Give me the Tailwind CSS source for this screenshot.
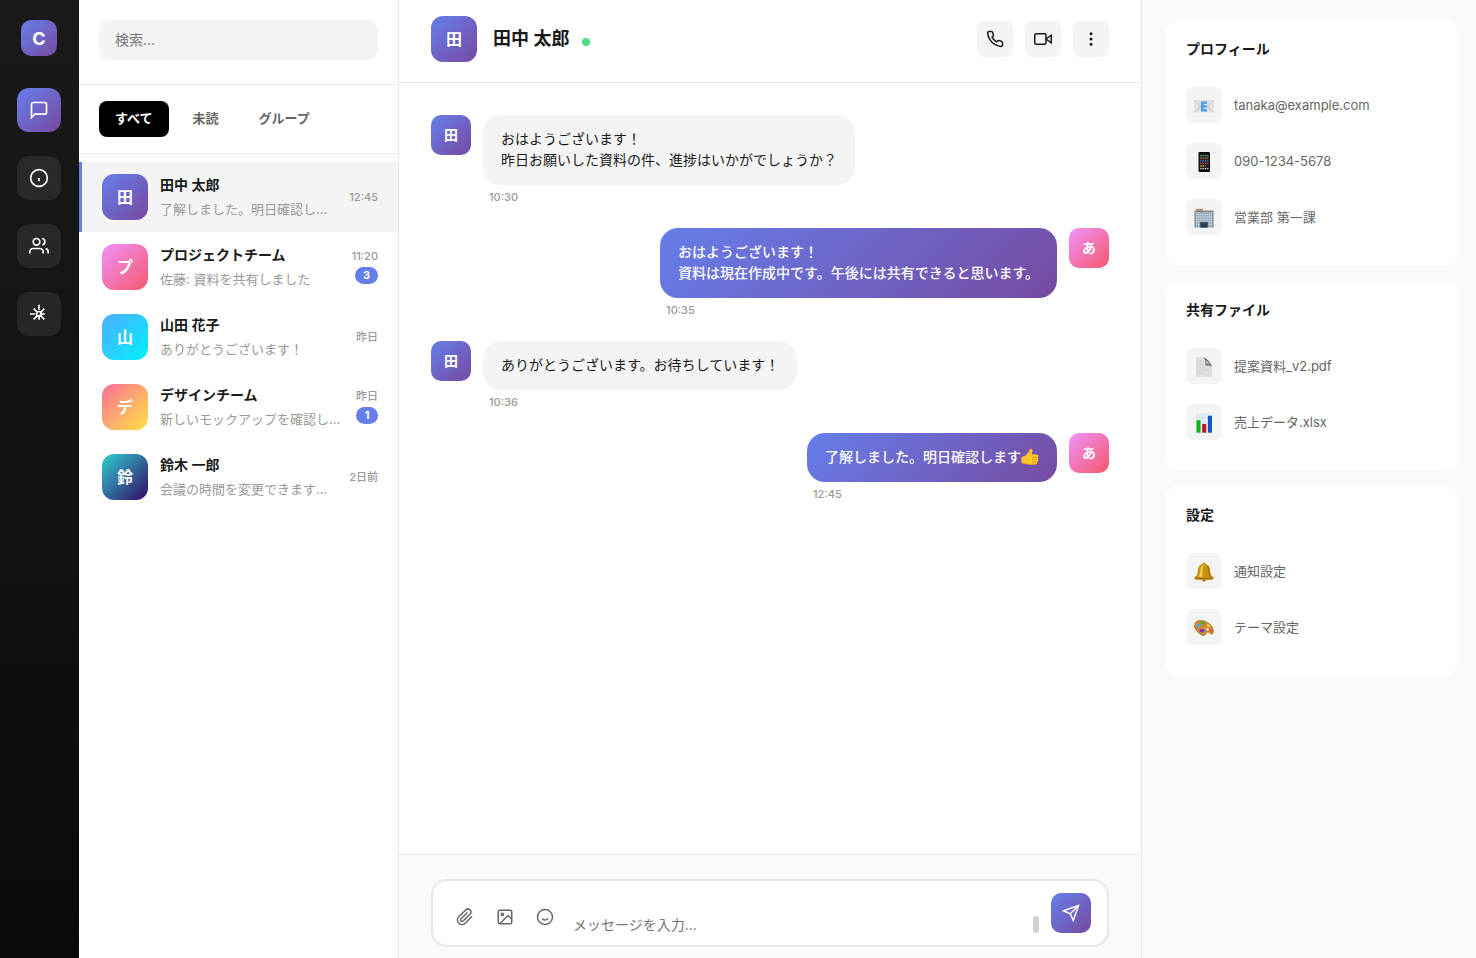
<!DOCTYPE html>
<html lang="ja">
<head>
  <meta charset="UTF-8">
  <meta name="viewport" content="width=device-width, initial-scale=1.0">
  <title>チャット</title>
  <script src="https://cdn.jsdelivr.net/npm/@tailwindcss/browser@4"></script>
</head>
<body class="flex h-screen overflow-hidden bg-[#fafafa] font-['Inter','Noto_Sans_CJK_JP',sans-serif] text-sm text-[#1a1a1a]">

  <!-- Icon rail -->
  <nav class="flex w-[79px] shrink-0 flex-col items-center bg-[linear-gradient(180deg,#1a1a1a,#0a0a0a)] py-5 pr-px text-white" aria-label="メイン">
    <div class="mb-8 flex size-9 items-center justify-center rounded-[10px] bg-[linear-gradient(135deg,#667eea,#764ba2)] pt-0.5 text-lg font-bold">C</div>
    <div class="flex flex-col gap-6">
      <button class="flex size-11 items-center justify-center rounded-xl bg-[linear-gradient(135deg,#667eea,#764ba2)]" aria-label="チャット">
        <svg class="size-5" viewBox="0 0 24 24" fill="none" stroke="currentColor" stroke-width="2"><path d="M21 15a2 2 0 0 1-2 2H7l-4 4V5a2 2 0 0 1 2-2h14a2 2 0 0 1 2 2z"/></svg>
      </button>
      <button class="flex size-11 items-center justify-center rounded-xl bg-white/8" aria-label="情報">
        <svg class="size-5" viewBox="0 0 24 24" fill="none" stroke="currentColor" stroke-width="2"><circle cx="12" cy="12" r="10"/><path d="M12 16v-4"/></svg>
      </button>
      <button class="flex size-11 items-center justify-center rounded-xl bg-white/8" aria-label="連絡先">
        <svg class="size-5" viewBox="0 0 24 24" fill="none" stroke="currentColor" stroke-width="2"><path d="M17 21v-2a4 4 0 0 0-4-4H5a4 4 0 0 0-4 4v2"/><circle cx="9" cy="7" r="4"/><path d="M23 21v-2a4 4 0 0 0-3-3.87M16 3.13a4 4 0 0 1 0 7.75"/></svg>
      </button>
      <button class="flex size-11 items-center justify-center rounded-xl bg-white/8" aria-label="設定">
        <svg class="size-5" viewBox="0 0 24 24" fill="none" stroke="currentColor" stroke-width="2"><circle cx="12" cy="12" r="3"/><path d="M12 1v6m0 6v6M1 12h6m6 0h6M5.6 5.6l4.3 4.3m4.2 4.2l4.3 4.3M5.6 18.4l4.3-4.3m4.2-4.2l4.3-4.3"/></svg>
      </button>
    </div>
  </nav>

  <!-- Conversations -->
  <aside class="flex w-80 shrink-0 flex-col border-r border-[#e8e8e8] bg-white">
    <div class="border-b border-[#e8e8e8] px-5 pt-5 pb-6">
      <input type="search" aria-label="検索" placeholder="検索..." class="block h-10 w-full rounded-[10px] bg-[#f4f4f4] px-4 pb-0.5 text-sm outline-none placeholder:text-[#757575]">
    </div>
    <div class="flex gap-2 border-b border-[#e8e8e8] px-5 py-4 text-[13px] font-semibold text-[#666]">
      <button class="h-9 rounded-lg bg-black px-4 pb-0.5 text-white">すべて</button>
      <button class="h-9 rounded-lg px-4 pb-0.5">未読</button>
      <button class="h-9 rounded-lg px-4 pb-0.5">グループ</button>
    </div>
    <div class="flex flex-col overflow-y-auto py-2">
      <button class="flex w-full items-center gap-3 border-l-3 border-[#667eea] bg-[#f4f4f4] px-5 py-3 text-left">
        <span class="flex size-[46px] shrink-0 items-center justify-center rounded-xl bg-[linear-gradient(135deg,#667eea,#764ba2)] text-base font-bold text-white">田</span>
        <span class="flex min-w-0 flex-1 flex-col gap-1 leading-5">
          <span class="truncate font-semibold">田中 太郎</span>
          <span class="truncate text-[13px] text-[#999]">了解しました。明日確認し...</span>
        </span>
        <span class="text-[11px] leading-[13px] font-medium text-[#999]">12:45</span>
      </button>
      <button class="flex w-full items-center gap-3 border-l-3 border-transparent px-5 py-3 text-left">
        <span class="flex size-[46px] shrink-0 items-center justify-center rounded-xl bg-[linear-gradient(135deg,#f093fb,#f5576c)] text-base font-bold text-white">プ</span>
        <span class="flex min-w-0 flex-1 flex-col gap-1 leading-5">
          <span class="truncate font-semibold">プロジェクトチーム</span>
          <span class="truncate text-[13px] text-[#999]">佐藤: 資料を共有しました</span>
        </span>
        <span class="flex flex-col items-end gap-1 text-[11px] leading-[13px] font-medium text-[#999]">
          11:20
          <span class="min-w-[22px] rounded-full bg-[#667eea] px-2 py-0.5 text-center font-bold text-white">3</span>
        </span>
      </button>
      <button class="flex w-full items-center gap-3 border-l-3 border-transparent px-5 py-3 text-left">
        <span class="flex size-[46px] shrink-0 items-center justify-center rounded-xl bg-[linear-gradient(135deg,#4facfe,#00f2fe)] text-base font-bold text-white">山</span>
        <span class="flex min-w-0 flex-1 flex-col gap-1 leading-5">
          <span class="truncate font-semibold">山田 花子</span>
          <span class="truncate text-[13px] text-[#999]">ありがとうございます！</span>
        </span>
        <span class="text-[11px] leading-[13px] font-medium text-[#999]">昨日</span>
      </button>
      <button class="flex w-full items-center gap-3 border-l-3 border-transparent px-5 py-3 text-left">
        <span class="flex size-[46px] shrink-0 items-center justify-center rounded-xl bg-[linear-gradient(135deg,#fa709a,#fee140)] text-base font-bold text-white">デ</span>
        <span class="flex min-w-0 flex-1 flex-col gap-1 leading-5">
          <span class="truncate font-semibold">デザインチーム</span>
          <span class="truncate text-[13px] text-[#999]">新しいモックアップを確認し...</span>
        </span>
        <span class="flex flex-col items-end gap-1 text-[11px] leading-[13px] font-medium text-[#999]">
          昨日
          <span class="min-w-[22px] rounded-full bg-[#667eea] px-2 py-0.5 text-center font-bold text-white">1</span>
        </span>
      </button>
      <button class="flex w-full items-center gap-3 border-l-3 border-transparent px-5 py-3 text-left">
        <span class="flex size-[46px] shrink-0 items-center justify-center rounded-xl bg-[linear-gradient(135deg,#30cfd0,#330867)] text-base font-bold text-white">鈴</span>
        <span class="flex min-w-0 flex-1 flex-col gap-1 leading-5">
          <span class="truncate font-semibold">鈴木 一郎</span>
          <span class="truncate text-[13px] text-[#999]">会議の時間を変更できます...</span>
        </span>
        <span class="text-[11px] leading-[13px] font-medium text-[#999]">2日前</span>
      </button>
    </div>
  </aside>

  <!-- Chat -->
  <main class="flex min-w-0 flex-1 flex-col bg-white">
    <header class="flex items-center justify-between border-b border-[#e8e8e8] px-8 pt-4 pb-5">
      <div class="flex items-center gap-4">
        <div class="flex size-[46px] items-center justify-center rounded-xl bg-[linear-gradient(135deg,#667eea,#764ba2)] text-base font-bold text-white">田</div>
        <h1 class="flex items-center gap-3 text-lg font-semibold">田中 太郎 <span class="mt-1.5 size-2 rounded-full bg-[#4ade80]"></span></h1>
      </div>
      <div class="flex gap-3">
        <button class="flex size-9 items-center justify-center rounded-lg bg-[#f4f4f4]" aria-label="通話">
          <svg class="size-[18px]" viewBox="0 0 24 24" fill="none" stroke="currentColor" stroke-width="2"><path d="M22 16.92v3a2 2 0 0 1-2.18 2 19.79 19.79 0 0 1-8.63-3.07 19.5 19.5 0 0 1-6-6 19.79 19.79 0 0 1-3.07-8.67A2 2 0 0 1 4.11 2h3a2 2 0 0 1 2 1.72 12.84 12.84 0 0 0 .7 2.81 2 2 0 0 1-.45 2.11L8.09 9.91a16 16 0 0 0 6 6l1.27-1.27a2 2 0 0 1 2.11-.45 12.84 12.84 0 0 0 2.81.7A2 2 0 0 1 22 16.92z"/></svg>
        </button>
        <button class="flex size-9 items-center justify-center rounded-lg bg-[#f4f4f4]" aria-label="ビデオ通話">
          <svg class="size-[18px]" viewBox="0 0 24 24" fill="none" stroke="currentColor" stroke-width="2"><path d="M23 7l-7 5 7 5V7z"/><rect x="1" y="5" width="15" height="14" rx="2"/></svg>
        </button>
        <button class="flex size-9 items-center justify-center rounded-lg bg-[#f4f4f4]" aria-label="メニュー">
          <svg class="size-[18px]" viewBox="0 0 24 24" fill="none" stroke="currentColor" stroke-width="2"><circle cx="12" cy="5" r="1"/><circle cx="12" cy="12" r="1"/><circle cx="12" cy="19" r="1"/></svg>
        </button>
      </div>
    </header>

    <div class="flex flex-1 flex-col gap-6 overflow-y-auto p-8">
      <div class="flex gap-3">
        <div class="flex size-10 shrink-0 items-center justify-center rounded-[10px] bg-[linear-gradient(135deg,#667eea,#764ba2)] text-sm font-bold text-white">田</div>
        <div>
          <p class="rounded-[18px] bg-[#f4f4f4] px-[18px] pt-[13px] pb-[15px] leading-[21px]">おはようございます！<br>昨日お願いした資料の件、進捗はいかがでしょうか？</p>
          <time class="mt-1.5 block px-1.5 text-[11px] leading-[13px] font-medium text-[#999]">10:30</time>
        </div>
      </div>
      <div class="flex flex-row-reverse gap-3">
        <div class="flex size-10 shrink-0 items-center justify-center rounded-[10px] bg-[linear-gradient(135deg,#f093fb,#f5576c)] text-sm font-bold text-white">あ</div>
        <div>
          <p class="rounded-[18px] bg-[linear-gradient(135deg,#667eea,#764ba2)] px-[18px] pt-[13px] pb-[15px] leading-[21px] font-medium text-white">おはようございます！<br>資料は現在作成中です。午後には共有できると思います。</p>
          <time class="mt-1.5 block px-1.5 text-[11px] leading-[13px] font-medium text-[#999]">10:35</time>
        </div>
      </div>
      <div class="flex gap-3">
        <div class="flex size-10 shrink-0 items-center justify-center rounded-[10px] bg-[linear-gradient(135deg,#667eea,#764ba2)] text-sm font-bold text-white">田</div>
        <div>
          <p class="rounded-[18px] bg-[#f4f4f4] px-[18px] pt-[13px] pb-[15px] leading-[21px]">ありがとうございます。お待ちしています！</p>
          <time class="mt-1.5 block px-1.5 text-[11px] leading-[13px] font-medium text-[#999]">10:36</time>
        </div>
      </div>
      <div class="flex flex-row-reverse gap-3">
        <div class="flex size-10 shrink-0 items-center justify-center rounded-[10px] bg-[linear-gradient(135deg,#f093fb,#f5576c)] text-sm font-bold text-white">あ</div>
        <div>
          <p class="flex items-center rounded-[18px] bg-[linear-gradient(135deg,#667eea,#764ba2)] px-[18px] pt-[13px] pb-[15px] leading-[21px] font-medium text-white">了解しました。明日確認します<svg class="size-[18px]" viewBox="0 0 18 18" role="img" aria-label="いいね">
            <path d="M1 8.800c1.800-.3 3-.8 4.200-2.100C7 4.800 8.300 3.500 8.800 1.500c.3-1.100 1.700-1.100 2.300-.2.700 1.200.3 3.300-.5 5l5.300.2c1.700.1 2 2 .9 2.700 1 .7.9 2.100-.1 2.600.7.8.4 2-.6 2.400.4 1-.2 2-1.400 2.100-2.300.3-5.500.5-7.500 0C5 15.900 3.500 15.300 1 15.200c-1-1.500-1-5 0-6.400z" fill="#fdc52c"/>
            <path d="M11 9.300h5.600M11 11.800h5.400M10.600 14.200h5" stroke="#e09112" stroke-width=".7" fill="none"/>
            <path d="M1 15.200c2.500.1 4 .7 6.200 1.100 2 .5 5.200.3 7.500 0" stroke="#e59a17" stroke-width=".6" fill="none"/>
          </svg></p>
          <time class="mt-1.5 block px-1.5 text-[11px] leading-[13px] font-medium text-[#999]">12:45</time>
        </div>
      </div>
    </div>

    <!-- Composer -->
    <div class="border-t border-[#e8e8e8] bg-[#fafafa] px-8 pt-6 pb-[11px]">
      <form class="flex items-end gap-3 rounded-2xl border-2 border-[#e8e8e8] bg-white px-4 py-3" onsubmit="event.preventDefault()">
        <div class="flex gap-2 text-[#666]">
          <button type="button" class="flex size-8 items-center justify-center rounded-lg" aria-label="ファイルを添付">
            <svg class="size-[18px]" viewBox="0 0 24 24" fill="none" stroke="currentColor" stroke-width="2"><path d="M21.44 11.05l-9.19 9.19a6 6 0 0 1-8.49-8.49l9.19-9.19a4 4 0 0 1 5.66 5.66l-9.2 9.19a2 2 0 0 1-2.83-2.83l8.49-8.48"/></svg>
          </button>
          <button type="button" class="flex size-8 items-center justify-center rounded-lg" aria-label="画像">
            <svg class="size-[18px]" viewBox="0 0 24 24" fill="none" stroke="currentColor" stroke-width="2"><rect x="3" y="3" width="18" height="18" rx="2"/><circle cx="8.5" cy="8.5" r="1.5"/><path d="M21 15l-5-5L5 21"/></svg>
          </button>
          <button type="button" class="flex size-8 items-center justify-center rounded-lg" aria-label="絵文字">
            <svg class="size-[18px]" viewBox="0 0 24 24" fill="none" stroke="currentColor" stroke-width="2"><circle cx="12" cy="12" r="10"/><path d="M8 14s1.5 2 4 2 4-2 4-2"/></svg>
          </button>
        </div>
        <div class="flex min-w-0 flex-1">
          <textarea rows="1" aria-label="メッセージ" placeholder="メッセージを入力..." class="block h-[17px] min-w-0 flex-1 resize-none overflow-hidden text-sm leading-[17px] outline-none placeholder:text-[#757575]"></textarea>
          <span class="w-1.5 rounded-full bg-[#d0d0d0]"></span>
        </div>
        <button class="flex size-10 items-center justify-center rounded-[10px] bg-[linear-gradient(135deg,#667eea,#764ba2)] text-white" aria-label="送信">
          <svg class="size-[18px]" viewBox="0 0 24 24" fill="none" stroke="currentColor" stroke-width="2"><path d="M22 2L11 13"/><path d="M22 2l-7 20-4-9-9-4 20-7z"/></svg>
        </button>
      </form>
    </div>
  </main>

  <!-- Details -->
  <aside class="flex w-[335px] shrink-0 flex-col gap-4 border-l border-[#e8e8e8] bg-[#fafafa] pt-5 pr-[19px] pl-6">
    <section class="rounded-xl bg-white p-5">
      <h2 class="mb-5 leading-[17px] font-bold">プロフィール</h2>
      <ul class="text-[13px] text-[#666]">
        <li class="flex items-center gap-3 py-2.5">
          <span class="flex size-9 items-center justify-center rounded-lg bg-[#f4f4f4] pt-0.5">
            <svg class="size-5" viewBox="0 0 20 20"><rect y="4" width="20" height="12.5" rx=".8" fill="#e2e2e2"/><path d="M.4 16.2L7.5 9.5M19.6 16.2L12.5 9.5M.4 4.4l8 7.500q1.600 1.400 3.200 0l8-7.500" stroke="#b9b9b9" stroke-width=".8" fill="none"/><path d="M7 5.500h6v2.300H9.600v1.500h3V11.500h-3v1.700H13v2.300H7z" fill="#4a9df0"/></svg>
          </span>
          <a href="mailto:tanaka@example.com">tanaka@example.com</a>
        </li>
        <li class="flex items-center gap-3 py-2.5">
          <span class="flex size-9 items-center justify-center rounded-lg bg-[#f4f4f4] pt-0.5">
            <svg class="size-5" viewBox="0 0 20 20"><rect x="4.5" width="11.5" height="20" rx="1.2" fill="#0b0b0b"/><rect x="5.6" y="2" width="9.3" height="15.8" fill="#22252b"/><g stroke-width="1.3" stroke-dasharray="1.3 1"><path d="M6.300 3.600h8" stroke="#4fb36a"/><path d="M6.300 6.200h8" stroke="#e07b39"/><path d="M6.300 8.800h8" stroke="#3c8be0"/><path d="M6.300 11.400h8" stroke="#d64550"/><path d="M6.300 14h5" stroke="#d9b93b"/><path d="M6.300 16.700h8" stroke="#d8e8ee"/></g></svg>
          </span>
          <span>090-1234-5678</span>
        </li>
        <li class="flex items-center gap-3 py-2.5">
          <span class="flex size-9 items-center justify-center rounded-lg bg-[#f4f4f4] pt-0.5">
            <svg class="size-5" viewBox="0 0 20 20"><path d="M2 .8h7v2H2z" fill="#a08f86"/><path d="M.5 2.500h19v2H.5z" fill="#8b8580"/><path d="M1 4.500h18v15H1z" fill="#8fa9b8"/><path d="M2 6.500h16M2 9h16M2 11.500h16M2 14h16M2 16.500h16" stroke="#c9dde6" stroke-width="1.3" stroke-dasharray="1.3 .8"/><path d="M1 4.500v15M19 4.500v15" stroke="#8a7e78"/><path d="M6 14h8v5.500H6z" fill="#4b5258"/><path d="M7.500 15.500h2v4h-2zM10.500 15.500h2v4h-2z" fill="#17384f"/></svg>
          </span>
          <span>営業部 第一課</span>
        </li>
      </ul>
    </section>

    <section class="rounded-xl bg-white p-5">
      <h2 class="mb-5 leading-[17px] font-bold">共有ファイル</h2>
      <ul class="text-[13px] text-[#666]">
        <li class="flex items-center gap-3 py-2.5">
          <span class="flex size-9 items-center justify-center rounded-lg bg-[#f4f4f4] pt-0.5">
            <svg class="size-5" viewBox="0 0 20 20"><path d="M2 .3h8.500l7.500 9.500v9.900H2z" fill="#dedede"/><path d="M3.500 4h6M3.500 7h6M3.500 10h8M3.500 13h12M3.500 16h5" stroke="#cbcbcb" stroke-width=".7"/><path d="M9.500.3c2 1.500 2.300 4.500 1.800 8.300 2.700-.3 5.200-.1 6.700 1.500C17.500 6.500 13 1.500 9.500.3z" fill="#6a6a6a"/><path d="M11.900 7.400c2-.9 3.500-.6 4.600.1L12.300 3c.2 1.500 0 3-.4 4.400z" fill="#b5b5b5"/></svg>
          </span>
          <a href="#">提案資料_v2.pdf</a>
        </li>
        <li class="flex items-center gap-3 py-2.5">
          <span class="flex size-9 items-center justify-center rounded-lg bg-[#f4f4f4] pt-0.5">
            <svg class="size-5" viewBox="0 0 20 20"><path d="M2 .3h16v19.400H2z" fill="#dfeaf2"/><path d="M2 5h16M2 10h16M2 15h16" stroke="#c7d6e2" stroke-width=".5"/><path d="M2.500 7.200h4v12.500h-4z" fill="#0bb41c"/><path d="M8.200 11h4v8.700h-4z" fill="#c4121a"/><path d="M13.900 2.800h4v16.900h-4z" fill="#1059c4"/></svg>
          </span>
          <a href="#">売上データ.xlsx</a>
        </li>
      </ul>
    </section>

    <section class="rounded-xl bg-white p-5">
      <h2 class="mb-5 leading-[17px] font-bold">設定</h2>
      <ul class="text-[13px] text-[#666]">
        <li class="flex items-center gap-3 py-2.5">
          <span class="flex size-9 items-center justify-center rounded-lg bg-[#f4f4f4] pt-0.5">
            <svg class="size-5" viewBox="0 0 20 20"><circle cx="10" cy="17.5" r="1.9" fill="#8a5a0c"/><path d="M10 .8c1 0 1.600.5 1.900 1.100 3 .9 4.100 3.400 4.300 6.600.2 3.300.6 4.700 3.100 6.700.5.500.4 1.900-.2 2.200-5.500 1-12.700 1-18.200 0-.6-.3-.7-1.700-.2-2.200 2.500-2 2.900-3.400 3.100-6.700.2-3.200 1.300-5.700 4.300-6.600C8.400 1.300 9 .8 10 .8z" fill="#c9940f"/><path d="M8.500 3C6.500 4.500 6.300 8 6 11c-.2 1.500-.8 2.800-1.500 3.800h4.300c-.5-3.500-.6-8 .7-11.800z" fill="#f1cf4b"/><path d="M13.500 4c1.300 2 1.200 5 1.500 7.200.2 1.500.8 2.700 1.500 3.600" stroke="#93650a" fill="none"/><path d="M.9 15.800c5.700 1 12.500 1 18.200 0" stroke="#7d5208" stroke-width=".7" fill="none"/></svg>
          </span>
          <a href="#">通知設定</a>
        </li>
        <li class="flex items-center gap-3 py-2.5">
          <span class="flex size-9 items-center justify-center rounded-lg bg-[#f4f4f4] pt-0.5">
            <svg class="size-5" viewBox="0 0 20 20"><path d="M.3 6.800C.6 3.200 4.500 1.300 9 2.200c5.500 1.100 10.200 5.500 10.800 10.200.3 2.600-.9 4.300-2.600 4.100-1.700-.2-1.700-1.800-3.300-1.900-1.800 0-1.200 2.600-3.200 3C7.500 18.300.1 12.300.3 6.800z" fill="#c98a3a"/><path d="M.3 7.800c.8 4.700 5.700 9.200 9.700 9.900" stroke="#8f5a1d" stroke-width=".7" fill="none"/><ellipse cx="13.6" cy="11.3" rx="1.4" ry="1.1" fill="#f4f4f4"/><ellipse cx="9" cy="5" rx="2" ry="1.3" fill="#25b83a" transform="rotate(20 9 5)"/><ellipse cx="4.8" cy="7.3" rx="2" ry="1.5" fill="#35b4e8"/><ellipse cx="7.8" cy="12.7" rx="2.5" ry="1.6" fill="#7d25cf"/><ellipse cx="14.3" cy="7.6" rx="1.9" ry="1.2" fill="#f3cb2b" transform="rotate(35 14.3 7.6)"/><ellipse cx="17.3" cy="12.3" rx="2" ry="1.2" fill="#e8503e" transform="rotate(55 17.3 12.3)"/></svg>
          </span>
          <a href="#">テーマ設定</a>
        </li>
      </ul>
    </section>
  </aside>

</body>
</html>
